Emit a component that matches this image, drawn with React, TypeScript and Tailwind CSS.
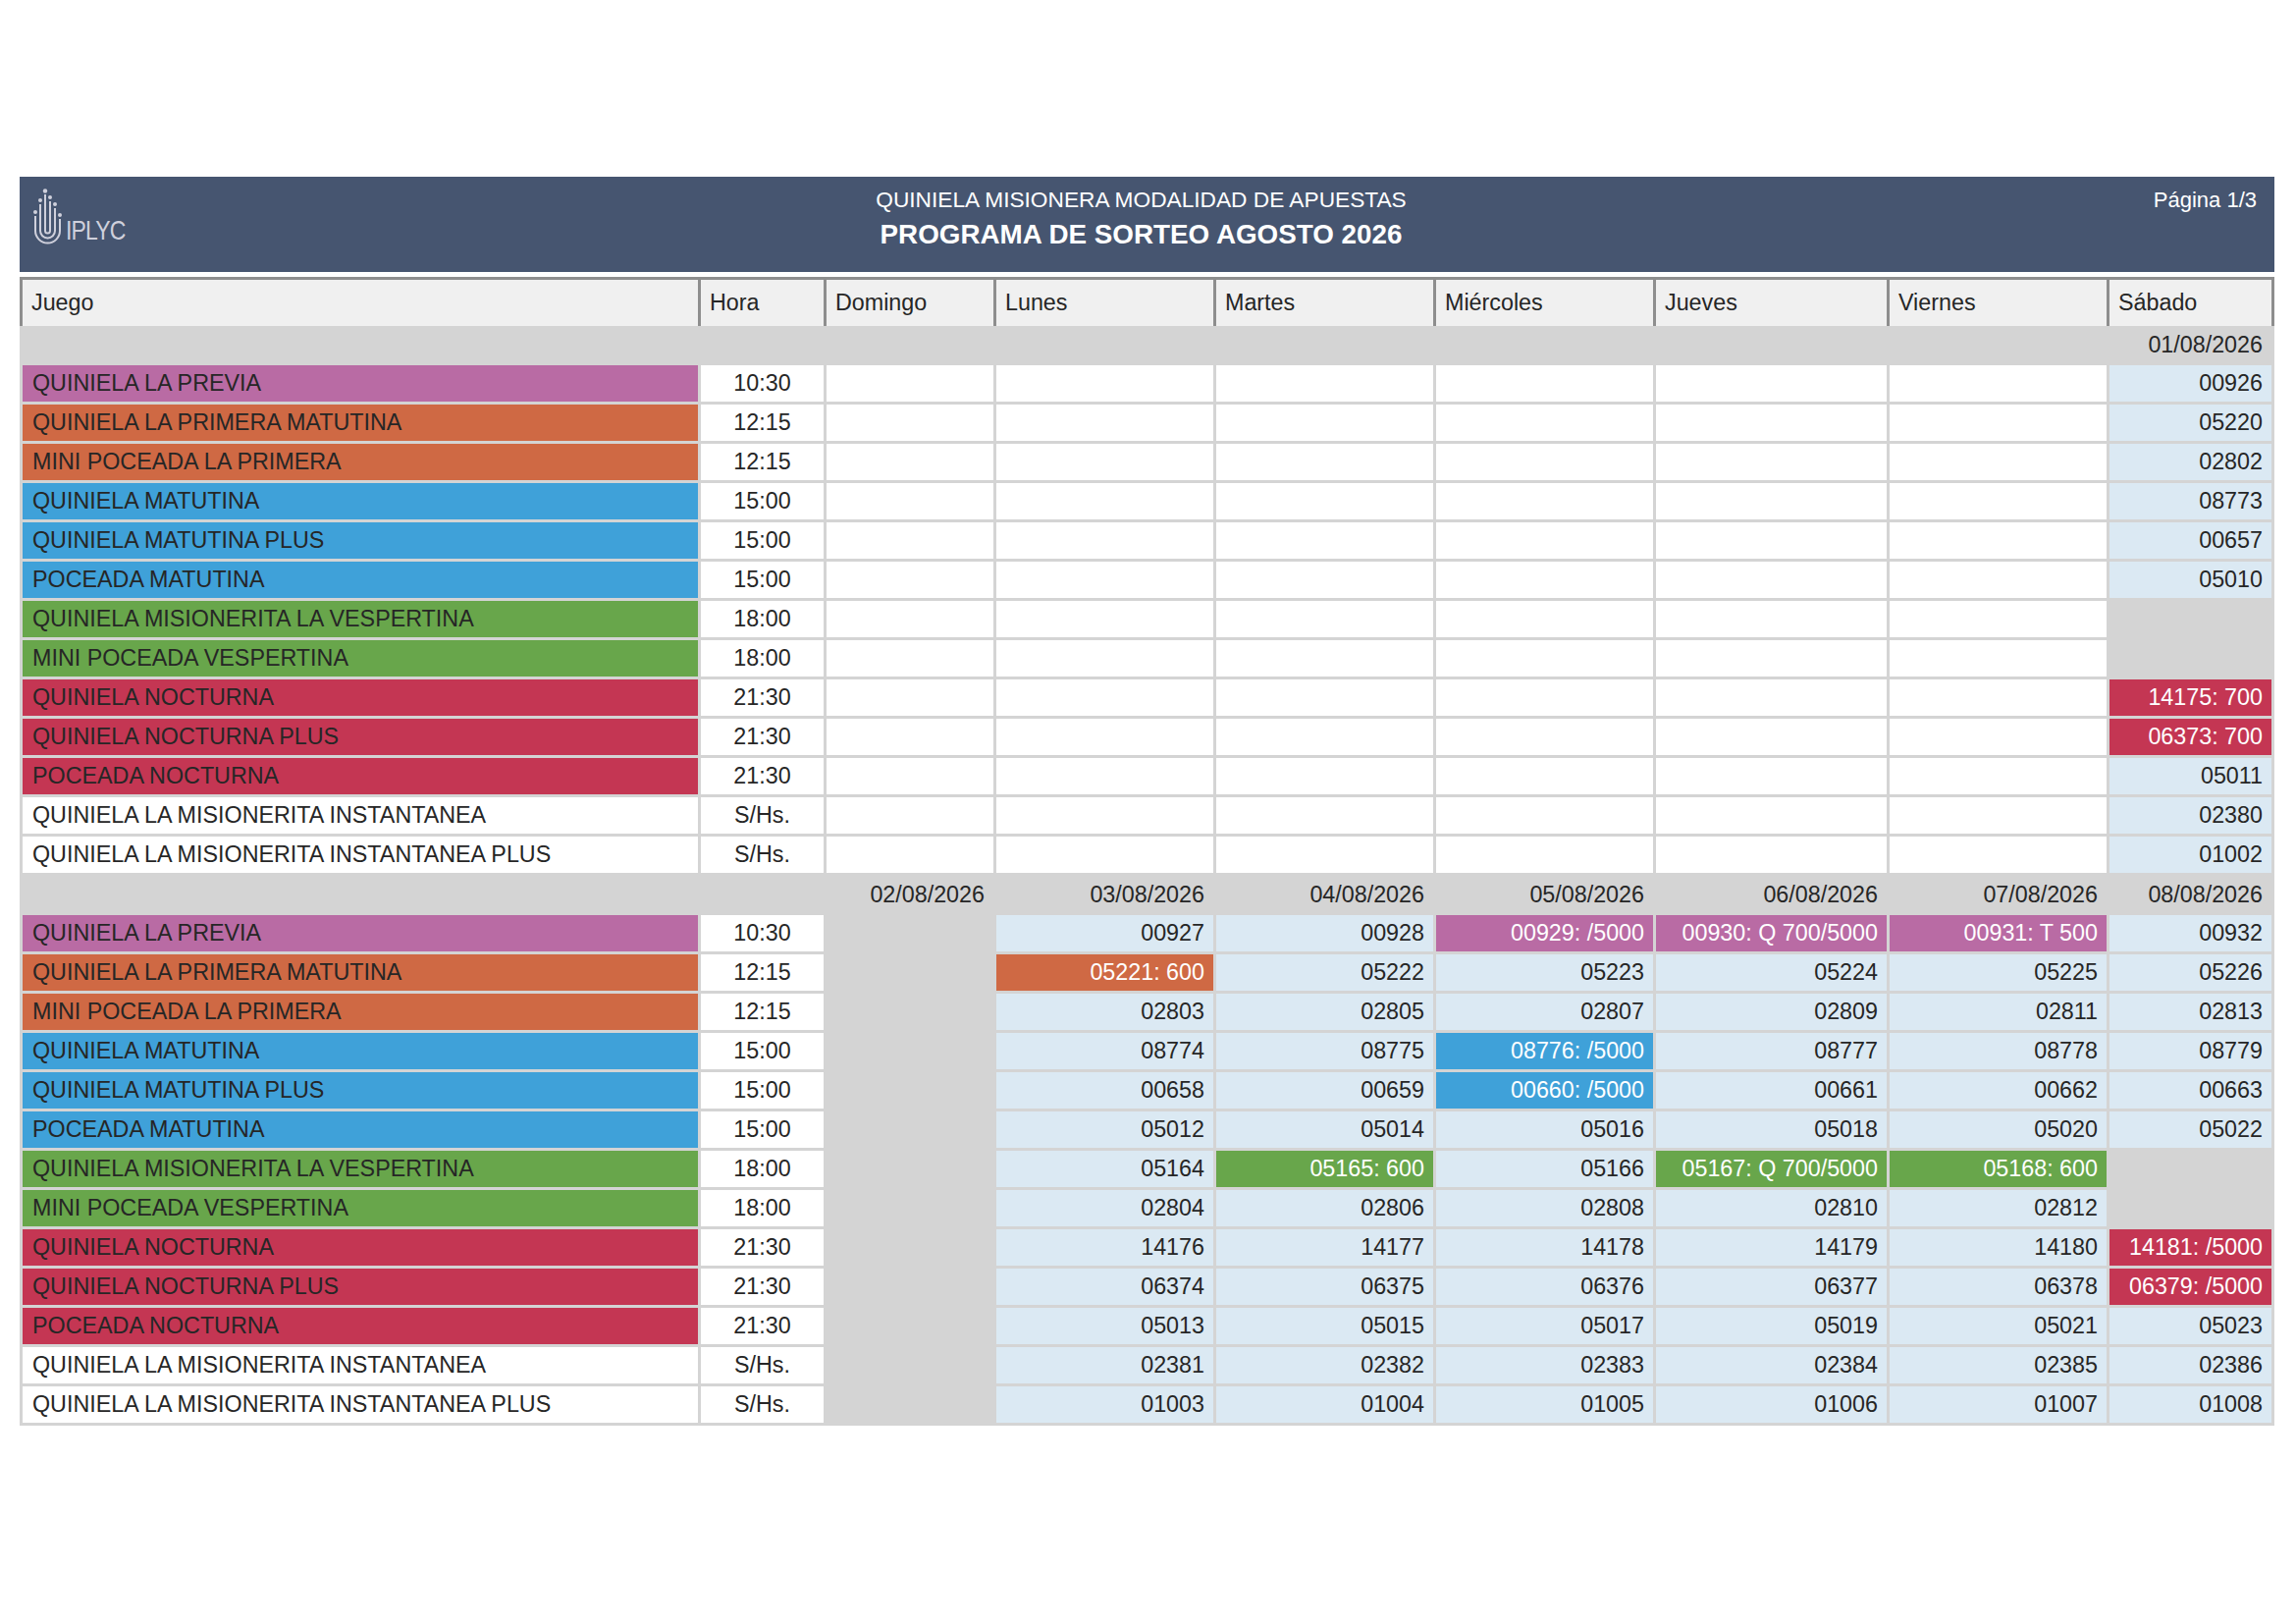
import React from "react";

type Tone = "purple" | "orange" | "blue" | "green" | "red" | "white";
type Cell = string | null | { t: string };

const toneBg: Record<Tone, string> = {
  purple: "bg-[#b96ba4]",
  orange: "bg-[#cf6944]",
  blue: "bg-[#3fa1d9]",
  green: "bg-[#68a64b]",
  red: "bg-[#c43653]",
  white: "bg-white",
};

const cols = "grid grid-cols-[688px_125px_170px_221px_221px_221px_235px_221px_165px]";

const dias = ["Juego", "Hora", "Domingo", "Lunes", "Martes", "Miércoles", "Jueves", "Viernes", "Sábado"];

const juegos: { name: string; hora: string; tone: Tone }[] = [
  { name: "QUINIELA LA PREVIA", hora: "10:30", tone: "purple" },
  { name: "QUINIELA LA PRIMERA MATUTINA", hora: "12:15", tone: "orange" },
  { name: "MINI POCEADA LA PRIMERA", hora: "12:15", tone: "orange" },
  { name: "QUINIELA MATUTINA", hora: "15:00", tone: "blue" },
  { name: "QUINIELA MATUTINA PLUS", hora: "15:00", tone: "blue" },
  { name: "POCEADA MATUTINA", hora: "15:00", tone: "blue" },
  { name: "QUINIELA MISIONERITA LA VESPERTINA", hora: "18:00", tone: "green" },
  { name: "MINI POCEADA VESPERTINA", hora: "18:00", tone: "green" },
  { name: "QUINIELA NOCTURNA", hora: "21:30", tone: "red" },
  { name: "QUINIELA NOCTURNA PLUS", hora: "21:30", tone: "red" },
  { name: "POCEADA NOCTURNA", hora: "21:30", tone: "red" },
  { name: "QUINIELA LA MISIONERITA INSTANTANEA", hora: "S/Hs.", tone: "white" },
  { name: "QUINIELA LA MISIONERITA INSTANTANEA PLUS", hora: "S/Hs.", tone: "white" },
];

// semana 1: solo el sabado 01/08
const sabado1: Cell[] = [
  "00926", "05220", "02802", "08773", "00657", "05010", null, null,
  { t: "14175: 700" }, { t: "06373: 700" }, "05011", "02380", "01002",
];

const semana1: Cell[][] = sabado1.map((s) => ["", "", "", "", "", "", s]);

// semana 2: domingo sin sorteos
const semana2: Cell[][] = [
  [null, "00927", "00928", { t: "00929: /5000" }, { t: "00930: Q 700/5000" }, { t: "00931: T 500" }, "00932"],
  [null, { t: "05221: 600" }, "05222", "05223", "05224", "05225", "05226"],
  [null, "02803", "02805", "02807", "02809", "02811", "02813"],
  [null, "08774", "08775", { t: "08776: /5000" }, "08777", "08778", "08779"],
  [null, "00658", "00659", { t: "00660: /5000" }, "00661", "00662", "00663"],
  [null, "05012", "05014", "05016", "05018", "05020", "05022"],
  [null, "05164", { t: "05165: 600" }, "05166", { t: "05167: Q 700/5000" }, { t: "05168: 600" }, null],
  [null, "02804", "02806", "02808", "02810", "02812", null],
  [null, "14176", "14177", "14178", "14179", "14180", { t: "14181: /5000" }],
  [null, "06374", "06375", "06376", "06377", "06378", { t: "06379: /5000" }],
  [null, "05013", "05015", "05017", "05019", "05021", "05023"],
  [null, "02381", "02382", "02383", "02384", "02385", "02386"],
  [null, "01003", "01004", "01005", "01006", "01007", "01008"],
];

const fechas1 = ["", "", "", "", "", "", "01/08/2026"];
const fechas2 = ["02/08/2026", "03/08/2026", "04/08/2026", "05/08/2026", "06/08/2026", "07/08/2026", "08/08/2026"];

const Logo = () => (
  <div className="flex items-end gap-[3px]">
    <svg width="31" height="58" viewBox="0 0 31 58" fill="none" stroke="#cfd0dc" strokeWidth="2">
      <path d="M3 28 V43 A12.5 12.5 0 0 0 28 43 V31" />
      <path d="M8 16 V43 A7.5 7.5 0 0 0 23 43 V20" />
      <path d="M13 6 V43 A2.5 2.5 0 0 0 18 43 V13" />
      <circle cx="3" cy="24" r="2" fill="#cfd0dc" stroke="none" />
      <circle cx="8" cy="12" r="2" fill="#cfd0dc" stroke="none" />
      <circle cx="13" cy="2.5" r="2.2" fill="#cfd0dc" stroke="none" />
      <circle cx="18" cy="9" r="2" fill="#cfd0dc" stroke="none" />
      <circle cx="23" cy="16" r="2" fill="#cfd0dc" stroke="none" />
      <circle cx="28" cy="27" r="2" fill="#cfd0dc" stroke="none" />
    </svg>
    <span className="text-[28px] leading-[28px] tracking-[-1px] text-[#cfd0dc] mb-[1px] inline-block scale-x-[0.82] origin-left">
      IPLYC
    </span>
  </div>
);

const ValueCell = ({ cell, tone }: { cell: Cell; tone: Tone }) => {
  if (cell === null) return <div />;
  if (cell === "") return <div className="bg-white" />;
  if (typeof cell === "object")
    return (
      <div className={`${toneBg[tone]} text-white flex items-center justify-end pr-[9px]`}>{cell.t}</div>
    );
  return <div className="bg-[#dbe9f3] flex items-center justify-end pr-[9px]">{cell}</div>;
};

const Bloque = ({ fechas, semana }: { fechas: string[]; semana: Cell[][] }) => (
  <>
    <div className="col-span-2 h-[39px]" />
    {fechas.map((f, i) => (
      <div key={i} className="h-[39px] flex items-center justify-end pr-[9px]">
        {f}
      </div>
    ))}
    {juegos.map((j, r) => (
      <React.Fragment key={j.name}>
        <div className={`${toneBg[j.tone]} h-[37px] flex items-center pl-[10px]`}>{j.name}</div>
        <div className="bg-white flex items-center justify-center">{j.hora}</div>
        {semana[r].map((c, i) => (
          <ValueCell key={i} cell={c} tone={j.tone} />
        ))}
      </React.Fragment>
    ))}
  </>
);

export default function App() {
  return (
    <div className="w-[2339px] h-[1654px] bg-white font-['Liberation_Sans',Arial,sans-serif] text-[#262626] pt-[180px] pl-[20px]">
      <div className="w-[2297px]">
        <div className="h-[97px] bg-[#465570] text-white grid grid-cols-[1fr_auto_1fr]">
          <div className="pl-[13px] pt-[12px]">
            <Logo />
          </div>
          <div className="flex flex-col items-center pt-[10px] mr-[12px]">
            <div className="text-[22.7px] leading-[26px]">QUINIELA MISIONERA MODALIDAD DE APUESTAS</div>
            <div className="text-[27.8px] leading-[32px] font-bold mt-[7px]">PROGRAMA DE SORTEO AGOSTO 2026</div>
          </div>
          <div className="flex justify-end pt-[11px] pr-[18px] text-[22px] leading-[26px]">Página 1/3</div>
        </div>

        <div className={`${cols} mt-[5px] bg-[#8e8e8e] pt-[3px] px-[3px] gap-x-[3px] text-[23.3px]`}>
          {dias.map((d) => (
            <div key={d} className="h-[47px] bg-[#f0f0f0] flex items-center pl-[9px]">
              {d}
            </div>
          ))}
        </div>

        <div className={`${cols} bg-[#d4d4d4] px-[3px] pb-[3px] gap-[3px] text-[23.3px] auto-rows-[37px]`}>
          <Bloque fechas={fechas1} semana={semana1} />
          <Bloque fechas={fechas2} semana={semana2} />
        </div>
      </div>
    </div>
  );
}
